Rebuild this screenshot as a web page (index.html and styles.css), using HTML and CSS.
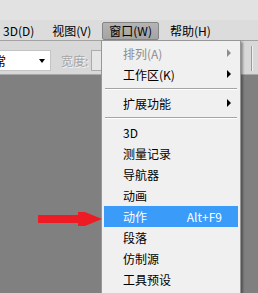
FILE: index.html
```html
<!DOCTYPE html>
<html>
<head>
<meta charset="utf-8">
<link rel="stylesheet" href="styles.css">
</head>
<body>
<div class="screen">
  <div class="top"></div>
  <div class="menubar">
    <span class="mi first">3D(D)</span>
    <span class="mi">视图(V)</span>
    <span class="mi active">窗口(W)</span>
    <span class="mi">帮助(H)</span>
  </div>
  <div class="toolbar">
    <div class="select"><span class="sel-text">常</span><i class="caret"></i></div>
    <span class="label">宽度:</span>
    <div class="field"></div>
    <div class="vline"></div>
  </div>
  <div class="workspace"></div>

  <div class="menu">
    <div class="item disabled"><span>排列(A)</span><i class="sub"></i></div>
    <div class="item"><span>工作区(K)</span><i class="sub"></i></div>
    <div class="sep"></div>
    <div class="item"><span>扩展功能</span><i class="sub"></i></div>
    <div class="sep"></div>
    <div class="item"><span>3D</span></div>
    <div class="item"><span>测量记录</span></div>
    <div class="item"><span>导航器</span></div>
    <div class="item"><span>动画</span></div>
    <div class="item hl"><span>动作</span><span class="shortcut">Alt+F9</span></div>
    <div class="item"><span>段落</span></div>
    <div class="item"><span>仿制源</span></div>
    <div class="item"><span>工具预设</span></div>
  </div>

  <svg class="pointer" width="66" height="15" viewBox="0 0 66 15">
    <polygon points="0,3 40,3 40,0 47,0 64,7 47,14 40,14 40,11 0,11" fill="#ed1c24"/>
  </svg>
</div>
</body>
</html>
```

FILE: styles.css
```css
html, body {
  margin: 0;
  padding: 0;
}
body {
  width: 258px;
  height: 293px;
  overflow: hidden;
  font-family: "Noto Sans CJK SC", "Liberation Sans", sans-serif;
  font-size: 12px;
  color: #000;
}
.screen {
  position: relative;
  width: 258px;
  height: 293px;
  display: flex;
  flex-direction: column;
  overflow: hidden;
  background: #808080;
}
.top {
  height: 20px;
  background: #e2e2e2;
}
.menubar {
  height: 20px;
  background: #dcdcdc;
  border-bottom: 1px solid #a2a2a2;
  display: flex;
  align-items: center;
  gap: 4px;
}
.mi {
  padding: 0 7px;
  height: 17px;
  line-height: 17px;
  white-space: nowrap;
}
.mi.first {
  margin-left: -4px;
}
.mi.active {
  padding: 0 6px;
  border: 1px solid #858585;
  border-radius: 2px;
  background: linear-gradient(#b4b4b4, #a4a4a4);
  height: 16px;
  line-height: 16px;
  margin-top: 1px;
}
.toolbar {
  height: 33px;
  background: #d8d8d8;
  border-bottom: 1px solid #a8a8a8;
  display: flex;
  align-items: flex-start;
}
.select {
  margin-top: 9px;
  margin-left: -10px;
  width: 59px;
  height: 19px;
  background: #fff;
  border: 1px solid #c4c4c4;
  border-left: none;
  display: flex;
  align-items: center;
  padding-left: 4px;
  box-sizing: border-box;
  width: 61px;
  height: 21px;
}
.sel-text {
  line-height: 19px;
}
.caret {
  margin-left: auto;
  margin-right: 5px;
  width: 0;
  height: 0;
  border-left: 3px solid transparent;
  border-right: 3px solid transparent;
  border-top: 4px solid #000;
}
.label {
  margin-top: 9px;
  margin-left: 10px;
  line-height: 21px;
  color: #a4a4a4;
  text-shadow: 1px 1px 0 #f4f4f4;
}
.field {
  margin-top: 9px;
  margin-left: 3px;
  width: 40px;
  height: 19px;
  border: 1px solid #ababab;
  background: #e6e6e6;
}
.vline {
  margin-top: 5px;
  margin-left: auto;
  margin-right: 5px;
  width: 1px;
  height: 25px;
  background: #9a9a9a;
  border-right: 1px solid #f0f0f0;
}
.workspace {
  flex: 1;
  background: #808080;
}

.menu {
  position: absolute;
  left: 101px;
  top: 40px;
  width: 138px;
  height: 270px;
  background: #f0f0f0;
  border: 1px solid #979797;
  box-shadow: 2px 2px 2px rgba(0, 0, 0, 0.35);
  padding: 2px 0;
}
.item {
  height: 21px;
  margin: 0 2px;
  padding-left: 19px;
  display: flex;
  align-items: center;
  white-space: nowrap;
}
.item.disabled {
  color: #8d8d8d;
}
.item.hl {
  background: #3a9bf9;
  color: #fff;
}
.shortcut {
  margin-left: auto;
  margin-right: 16px;
}
.sub {
  margin-left: auto;
  margin-right: 7px;
  margin-top: -2px;
  width: 0;
  height: 0;
  border-top: 4px solid transparent;
  border-bottom: 4px solid transparent;
  border-left: 4px solid #000;
}
.item.disabled .sub {
  border-left-color: #8d8d8d;
}
.sep {
  height: 1px;
  margin: 3px 3px 3px 3px;
  background: #a4a4a4;
  border-bottom: 1px solid #fff;
}
.pointer {
  position: absolute;
  left: 38px;
  top: 212px;
}
```
